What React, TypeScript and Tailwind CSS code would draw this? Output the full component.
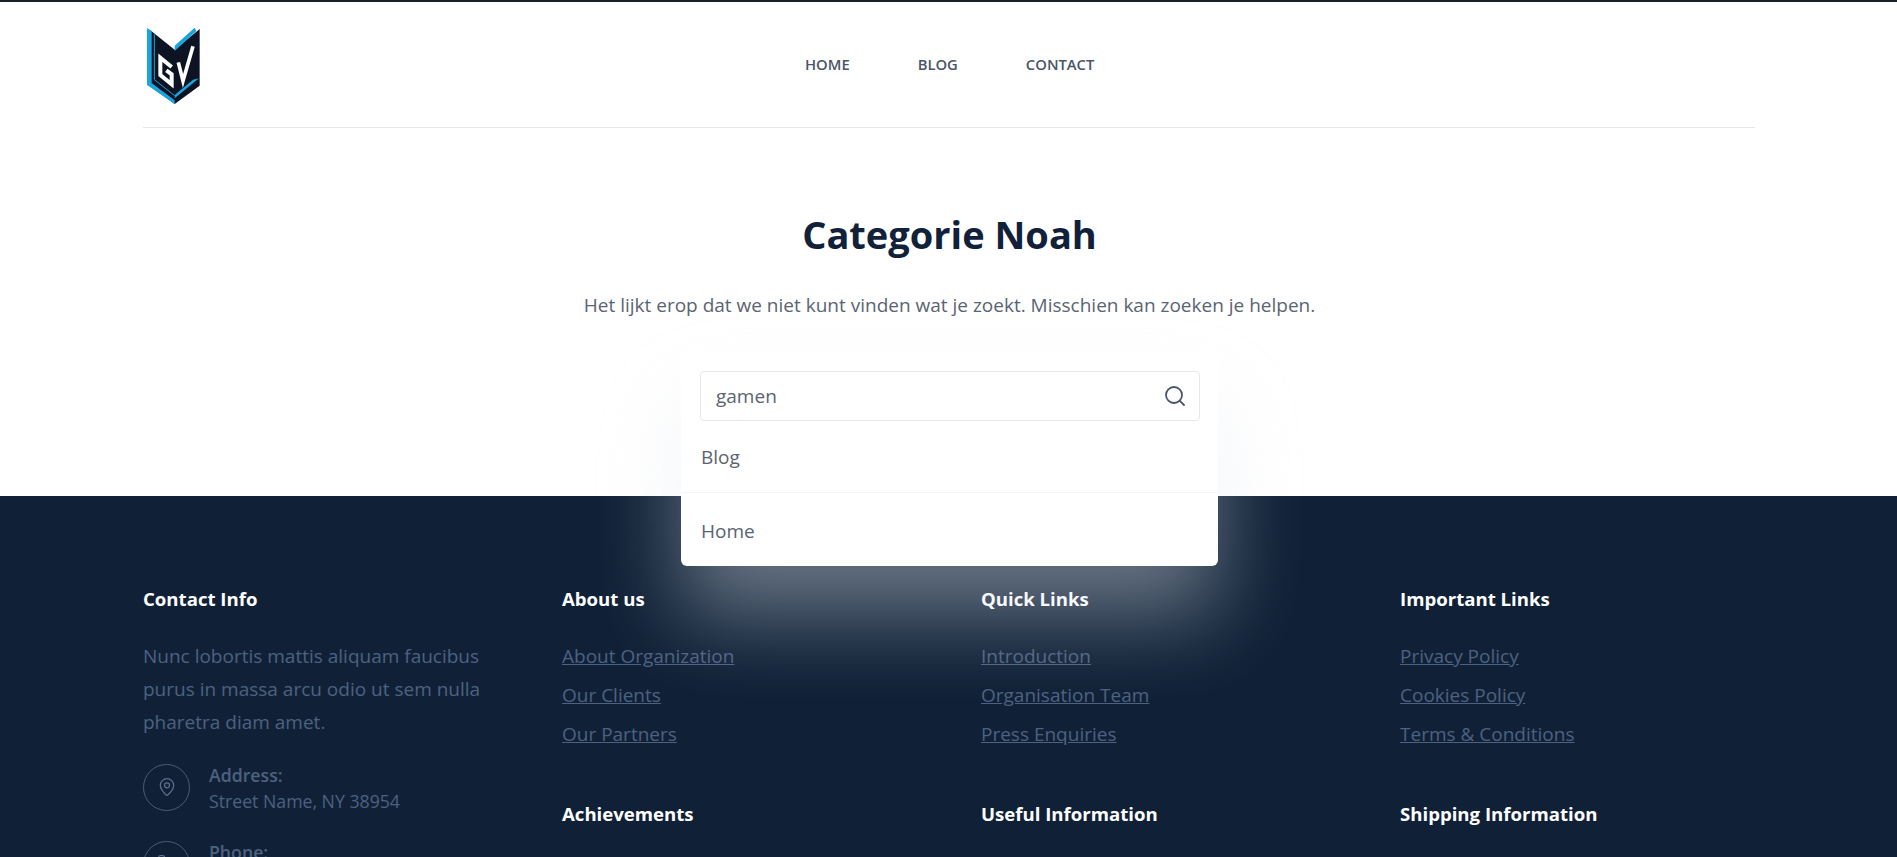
import { MapPin, Phone, Search } from 'lucide-react'

const columns = [
  {
    title: 'About us',
    links: ['About Organization', 'Our Clients', 'Our Partners'],
    next: 'Achievements',
  },
  {
    title: 'Quick Links',
    links: ['Introduction', 'Organisation Team', 'Press Enquiries'],
    next: 'Useful Information',
  },
  {
    title: 'Important Links',
    links: ['Privacy Policy', 'Cookies Policy', 'Terms & Conditions'],
    next: 'Shipping Information',
  },
]

function Logo() {
  return (
    <svg width="54" height="78" viewBox="52 85 162 234" className="block">
      {/* dark shield */}
      <polygon points="60,90 135,150 210,88 210,258 135,313 60,258" fill="#0c1322" />
      {/* blue edges */}
      <polygon points="52,85 66,94 66,250 135,302 135,313 52,256" fill="#1ba3dc" />
      <polygon points="135,138 195,84 200,94 135,154" fill="#1ba3dc" />
      <polygon points="190,240 208,236 135,296 135,286" fill="#1ba3dc" />
      {/* inner highlights */}
      <polyline points="74,104 74,240 135,288" fill="none" stroke="#1ba3dc" strokeWidth="3" />
      {/* G */}
      <polyline points="126,202 92,174 92,226 126,254 126,224 110,212" fill="none" stroke="#ffffff" strokeWidth="12" />
      {/* V */}
      <polyline points="146,188 160,244 190,140" fill="none" stroke="#ffffff" strokeWidth="11" />
    </svg>
  )
}

function ContactRow({ icon, label, value }: { icon: React.ReactNode; label: string; value: string }) {
  return (
    <div className="flex items-center gap-[19px]">
      <div className="flex h-[47px] w-[47px] shrink-0 items-center justify-center rounded-full border border-[#4a5b75] text-[#5b6e8a]">
        {icon}
      </div>
      <div className="-mb-px pt-px text-[17.7px] leading-[26px] text-[#4d6180]">
        <div className="font-semibold">{label}</div>
        <div>{value}</div>
      </div>
    </div>
  )
}

export default function App() {
  return (
    <div className="h-[857px] overflow-hidden bg-white font-['Open_Sans',sans-serif]">
      <div className="h-[2px] bg-[#1a202c]" />
      <header className="ml-[143px] flex h-[126px] w-[1612px] border-b border-[#e5e7eb]">
        <div className="w-[662px] pl-[4px] pt-[26px]">
          <Logo />
        </div>
        <nav className="flex gap-[68px] pt-[53px] text-[14.8px] font-semibold leading-[18px] text-[#4a5568]">
          <a>HOME</a>
          <a>BLOG</a>
          <a>CONTACT</a>
        </nav>
      </header>

      <main className="relative h-[368px] pl-[2px] text-center">
        <h1 className="pt-[81px] text-[38px] font-bold leading-[50px] text-[#12213a]">Categorie Noah</h1>
        <p className="mt-[32px] text-[19px] leading-[28px] text-[#5a6472]">
          Het lijkt erop dat we niet kunt vinden wat je zoekt. Misschien kan zoeken je helpen.
        </p>

        {/* search dropdown hangs over the footer */}
        <div className="absolute left-[681px] top-[223px] z-10 w-[537px] rounded-md bg-white px-[19px] pt-[20px] text-left shadow-[0_50px_85px_rgba(226,232,240,0.42)]">
          <div className="flex h-[50px] w-[500px] items-center justify-between rounded border border-[#e5e7eb] pl-[15px] pr-[12px]">
            <span className="text-[19px] text-[#5a6472]">gamen</span>
            <Search size={24} strokeWidth={1.8} className="text-[#4a5568]" />
          </div>
          <div className="-mx-[19px] flex h-[72px] items-center border-b border-[#f3f4f6] px-[20px] pt-[2px] text-[19px] text-[#5a6472]">
            Blog
          </div>
          <div className="-mx-[19px] flex h-[73px] items-center px-[20px] pt-[4px] text-[19px] text-[#5a6472]">Home</div>
        </div>
      </main>

      <footer className="h-[600px] bg-[#102137] pt-[91px]">
        <div className="ml-[143px] grid w-[1612px] grid-cols-4 gap-x-16">
          <div>
            <h3 className="text-[18.6px] font-bold leading-[24px] text-white">Contact Info</h3>
            <p className="mt-[29px] text-[19px] leading-[33px] text-[#4d6180]">
              Nunc lobortis mattis aliquam faucibus purus in massa arcu odio ut sem nulla pharetra diam amet.
            </p>
            <div className="mt-[22px] flex flex-col gap-[25px]">
              <ContactRow icon={<MapPin size={20} strokeWidth={1.5} />} label="Address:" value="Street Name, NY 38954" />
              <ContactRow icon={<Phone size={20} strokeWidth={1.5} />} label="Phone:" value="578-393-4937" />
            </div>
          </div>
          {columns.map((col) => (
            <div key={col.title}>
              <h3 className="text-[18.6px] font-bold leading-[24px] text-white">{col.title}</h3>
              <ul className="mt-[31px] flex flex-col gap-[11px] text-[19px] leading-[28px] text-[#4d6180] underline">
                {col.links.map((link) => (
                  <li key={link}>{link}</li>
                ))}
              </ul>
              <h3 className="mt-[54px] text-[18.6px] font-bold leading-[24px] text-white">{col.next}</h3>
            </div>
          ))}
        </div>
      </footer>
    </div>
  )
}
